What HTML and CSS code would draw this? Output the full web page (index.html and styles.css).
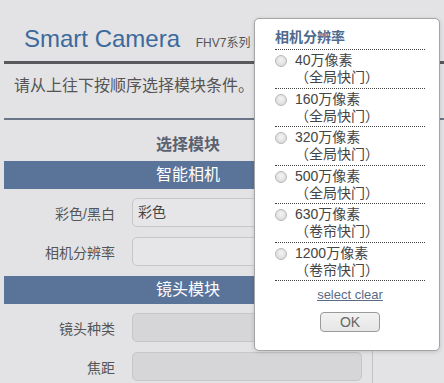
FILE: index.html
```html
<!DOCTYPE html>
<html lang="zh">

<head>
    <meta charset="UTF-8">
    <meta name="viewport" content="width=device-width, initial-scale=1.0">
    <title>Smart Camera</title>
    <link rel="stylesheet" href="styles.css">
</head>

<body>
    <div class="header">
        <h1>Smart Camera <small>FHV7系列</small></h1>
    </div>
    <p class="intro">请从上往下按顺序选择模块条件。</p>
    <div class="form">
        <h2>选择模块</h2>
        <div class="band">智能相机</div>
        <div class="row"><label>彩色/黑白</label><div class="field">彩色</div></div>
        <div class="row"><label>相机分辨率</label><div class="field"></div></div>
        <div class="band">镜头模块</div>
        <div class="row"><label>镜头种类</label><div class="field off"></div></div>
        <div class="row"><label>焦距</label><div class="field off"></div></div>
    </div>

    <div class="popup">
        <h3>相机分辨率</h3>
        <ul>
            <li><span class="radio"></span><span>40万像素<br>（全局快门）</span></li>
            <li><span class="radio"></span><span>160万像素<br>（全局快门）</span></li>
            <li><span class="radio"></span><span>320万像素<br>（全局快门）</span></li>
            <li><span class="radio"></span><span>500万像素<br>（全局快门）</span></li>
            <li><span class="radio"></span><span>630万像素<br>（卷帘快门）</span></li>
            <li><span class="radio"></span><span>1200万像素<br>（卷帘快门）</span></li>
        </ul>
        <a class="clear" href="javascript:;">select clear</a>
        <button class="ok">OK</button>
    </div>
</body>

</html>
```

FILE: styles.css
```css
* {
    margin: 0;
    padding: 0;
    list-style: none;
    box-sizing: border-box;
}

body {
    background-color: #e3e3e5;
    font-family: "Liberation Sans", "Noto Sans CJK SC", sans-serif;
    color: #555555;
    overflow: hidden;
}

.header {
    margin-left: 4px;
    padding: 25px 0 4px 20px;
    border-bottom: 3px solid #58595c;
}

.header h1 {
    font-size: 24px;
    line-height: 28px;
    font-weight: normal;
    color: #3c6a9c;
    white-space: nowrap;
}

.header small {
    font-size: 12px;
    color: #555555;
    margin-left: 9px;
}

.intro {
    margin-left: 4px;
    padding: 11px 0 21px 10px;
    font-size: 16px;
    line-height: 22px;
    border-bottom: 2px solid #6b7588;
}

.form {
    margin-left: 4px;
    width: 369px;
    border-right: 1px solid #c2c2c4;
    padding-bottom: 10px;
}

.form h2 {
    text-align: center;
    font-size: 16px;
    line-height: 22px;
    font-weight: 600;
    color: #5a6170;
    padding-top: 14px;
    margin-bottom: 5px;
}

.band {
    height: 28px;
    line-height: 28px;
    background-color: #5a7399;
    color: #ffffff;
    text-align: center;
    font-size: 16px;
    margin-bottom: 9px;
}

.row {
    display: flex;
    align-items: center;
    gap: 17px;
    margin-bottom: 10px;
}

.row label {
    width: 111px;
    text-align: right;
    font-size: 14px;
}

.field {
    width: 230px;
    height: 29px;
    line-height: 27px;
    padding-left: 5px;
    border: 1px solid #c6c6c8;
    border-radius: 5px;
    background-color: #e6e6e8;
    font-size: 14px;
    color: #444444;
}

.field.off {
    background-color: #d6d6d8;
}

.popup {
    position: absolute;
    left: 254px;
    top: 18px;
    width: 186px;
    height: 333px;
    padding: 9px 14px 0 20px;
    background-color: #ffffff;
    border: 1px solid #a4a4a6;
    border-radius: 5px;
    box-shadow: 0 1px 4px rgba(0, 0, 0, 0.15);
    text-align: center;
}

.popup h3 {
    text-align: left;
    font-size: 14px;
    line-height: 18px;
    color: #4f6a8c;
    padding-bottom: 3px;
    border-bottom: 1px dotted #444444;
}

.popup li {
    display: flex;
    gap: 8px;
    text-align: left;
    padding: 2px 0 1.5px;
    font-size: 14px;
    line-height: 17px;
    color: #444444;
    border-bottom: 1px dotted #444444;
}

.radio {
    flex: none;
    width: 12px;
    height: 12px;
    margin-top: 3px;
    border: 1px solid #b8b8ba;
    border-radius: 50%;
    background: radial-gradient(circle at 50% 40%, #f4f4f4, #d4d4d6);
}

.clear {
    display: inline-block;
    margin-top: 6px;
    font-size: 13px;
    line-height: 16px;
    color: #5a6b85;
    text-decoration: underline;
}

.ok {
    display: block;
    margin: 9px auto 0;
    width: 60px;
    height: 20px;
    font-family: "Liberation Sans", sans-serif;
    font-size: 14px;
    color: #666666;
    border: 1px solid #9a9a9c;
    border-radius: 4px;
    background: linear-gradient(#f2f2f2, #e6e6e6);
}
```
